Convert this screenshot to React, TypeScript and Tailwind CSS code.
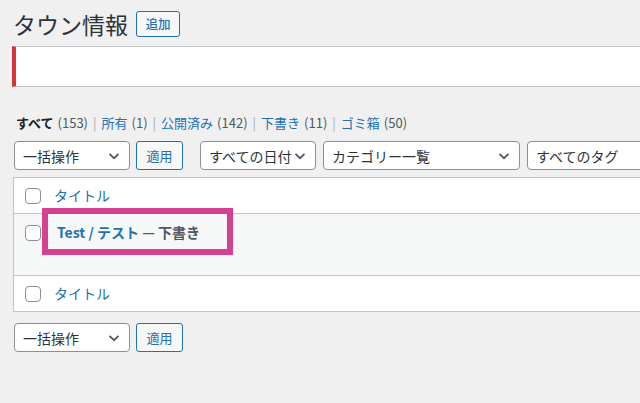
import React from "react";

const font = { fontFamily: '"Noto Sans CJK JP", "Noto Sans", sans-serif' };

function Chevron() {
  return (
    <svg width="12" height="8" viewBox="0 0 12 8" className="shrink-0">
      <path d="M1.5 1.8 L6 6.2 L10.5 1.8" fill="none" stroke="#50575e" strokeWidth="1.7" />
    </svg>
  );
}

function Select({ label, w }: { label: string; w: string }) {
  return (
    <div
      className={`${w} h-[29px] flex items-center justify-between pl-[8px] pr-[9px] bg-white border border-[#8c8f94] rounded-[4px] text-[14px] text-[#2c3338] shrink-0`}
    >
      <span className="leading-none">{label}</span>
      <Chevron />
    </div>
  );
}

function Apply() {
  return (
    <div className="w-[47px] h-[29px] flex items-center justify-center bg-[#f6f7f7] border border-[#2271b1] rounded-[3px] text-[13px] text-[#2271b1] shrink-0">
      適用
    </div>
  );
}

function Checkbox() {
  return <div className="w-[16px] h-[16px] bg-white border border-[#8c8f94] rounded-[4px] shrink-0" />;
}

function Sep() {
  return <span className="mx-[5px] text-[#a7aaad]">|</span>;
}

export default function App() {
  return (
    <div className="w-[640px] h-[403px] overflow-hidden bg-[#f0f0f1] relative" style={font}>
      <div className="w-[720px] pl-[12px]">
        {/* title */}
        <div className="flex items-center pt-[9px] h-[39px]">
          <h1 className="text-[23px] leading-[30px] font-normal text-[#2c3338] ml-[1px]">タウン情報</h1>
          <div className="ml-[8px] w-[44px] h-[26px] flex items-center justify-center border border-[#2271b1] rounded-[3px] bg-[#f6f7f7] text-[12.5px] font-medium text-[#2271b1]">
            追加
          </div>
        </div>
        {/* notice */}
        <div className="mt-[7px] h-[41px] bg-white border-y border-[#c3c4c7] border-l-[4px] border-l-[#d63638]" />
        {/* filter links */}
        <div className="mt-[27px] flex items-center text-[13px] leading-[18px] pl-[4px] text-[#50575e]">
          <span className="font-bold text-[#1d2327]">すべて</span>
          <span className="ml-[4px]">(153)</span>
          <Sep />
          <span className="text-[#2271b1]">所有</span>
          <span className="ml-[4px]">(1)</span>
          <Sep />
          <span className="text-[#2271b1]">公開済み</span>
          <span className="ml-[4px]">(142)</span>
          <Sep />
          <span className="text-[#2271b1]">下書き</span>
          <span className="ml-[4px]">(11)</span>
          <Sep />
          <span className="text-[#2271b1]">ゴミ箱</span>
          <span className="ml-[4px]">(50)</span>
        </div>
        {/* top nav */}
        <div className="mt-[9px] flex items-center pl-[2px]">
          <Select label="一括操作" w="w-[116px]" />
          <div className="ml-[6px]"><Apply /></div>
          <div className="ml-[17px]"><Select label="すべての日付" w="w-[116px]" /></div>
          <div className="ml-[7px]"><Select label="カテゴリー一覧" w="w-[197px]" /></div>
          <div className="ml-[7px]"><Select label="すべてのタグ" w="w-[160px]" /></div>
        </div>
        {/* table */}
        <div className="mt-[7px] ml-[1px] bg-white border border-[#c3c4c7]">
          <div className="h-[36px] flex items-center pl-[11px] border-b border-[#c3c4c7]">
            <Checkbox />
            <span className="ml-[13px] text-[14px] text-[#2271b1]">タイトル</span>
          </div>
          <div className="h-[61px] bg-[#f6f7f7] flex items-start pl-[11px] pt-[11px]">
            <Checkbox />
            <span className="ml-[16px] -mt-[2px] text-[14px] font-semibold text-[#2271b1] leading-[18px] whitespace-nowrap">
              Test / テスト <span className="text-[#50575e]">— 下書き</span>
            </span>
          </div>
          <div className="h-[36px] flex items-center pl-[11px] border-t border-[#c3c4c7]">
            <Checkbox />
            <span className="ml-[13px] text-[14px] text-[#2271b1]">タイトル</span>
          </div>
        </div>
        {/* bottom nav */}
        <div className="mt-[11px] flex items-center pl-[2px]">
          <Select label="一括操作" w="w-[116px]" />
          <div className="ml-[6px]"><Apply /></div>
        </div>
      </div>
      {/* highlight */}
      <div className="absolute left-[42px] top-[208px] w-[191px] h-[47px] border-[6px] border-[#d3418f]" />
    </div>
  );
}
